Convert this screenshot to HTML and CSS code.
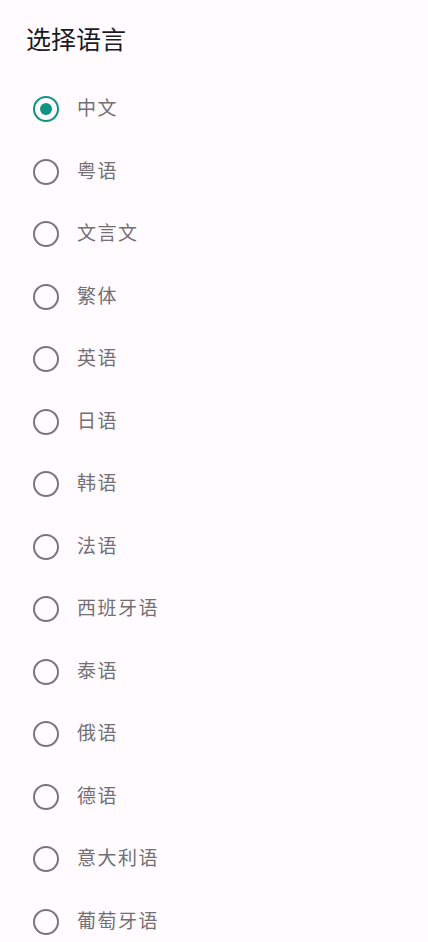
FILE: index.html
```html
<!DOCTYPE html>
<html lang="zh-CN">
<head>
    <meta charset="UTF-8">
    <meta name="viewport" content="width=device-width, initial-scale=1.0">
    <title>选择语言</title>
    <link rel="stylesheet" href="styles.css">
</head>
<body>
    <div class="dialog">
        <!-- 标题 -->
        <h2 class="dialog-title">选择语言</h2>

        <!-- 语言列表 -->
        <ul class="lang-list">
            <li class="lang-item checked"><span class="radio"></span><span class="lang-label">中文</span></li>
            <li class="lang-item"><span class="radio"></span><span class="lang-label">粤语</span></li>
            <li class="lang-item"><span class="radio"></span><span class="lang-label">文言文</span></li>
            <li class="lang-item"><span class="radio"></span><span class="lang-label">繁体</span></li>
            <li class="lang-item"><span class="radio"></span><span class="lang-label">英语</span></li>
            <li class="lang-item"><span class="radio"></span><span class="lang-label">日语</span></li>
            <li class="lang-item"><span class="radio"></span><span class="lang-label">韩语</span></li>
            <li class="lang-item"><span class="radio"></span><span class="lang-label">法语</span></li>
            <li class="lang-item"><span class="radio"></span><span class="lang-label">西班牙语</span></li>
            <li class="lang-item"><span class="radio"></span><span class="lang-label">泰语</span></li>
            <li class="lang-item"><span class="radio"></span><span class="lang-label">俄语</span></li>
            <li class="lang-item"><span class="radio"></span><span class="lang-label">德语</span></li>
            <li class="lang-item"><span class="radio"></span><span class="lang-label">意大利语</span></li>
            <li class="lang-item"><span class="radio"></span><span class="lang-label">葡萄牙语</span></li>
        </ul>
    </div>
</body>
</html>
```

FILE: styles.css
```css
/* 基础样式 */
* {
    box-sizing: border-box;
    margin: 0;
    padding: 0;
    font-family: Roboto, 'Noto Sans CJK SC', sans-serif;
}

body {
    background: #fffbfe;
    overflow: hidden;
}

.dialog {
    padding-top: 25px;
}

/* 标题 */
.dialog-title {
    font-size: 25px;
    font-weight: 400;
    line-height: 32px;
    color: #1c1b1f;
    padding-left: 26px;
    margin-bottom: 21px;
}

/* 列表 */
.lang-list {
    list-style: none;
}

.lang-item {
    display: flex;
    align-items: center;
    height: 62.5px;
    padding-left: 33px;
    gap: 18px;
}

.radio {
    width: 26px;
    height: 26px;
    border: 2.6px solid #79767a;
    border-radius: 50%;
    display: flex;
    align-items: center;
    justify-content: center;
    flex-shrink: 0;
}

.lang-item.checked .radio {
    border-color: #0f9484;
}

.lang-item.checked .radio::after {
    content: "";
    width: 12px;
    height: 12px;
    border-radius: 50%;
    background: #0f9484;
}

.lang-label {
    font-size: 19px;
    letter-spacing: 1.5px;
    color: #737074;
    line-height: 24px;
}
```
